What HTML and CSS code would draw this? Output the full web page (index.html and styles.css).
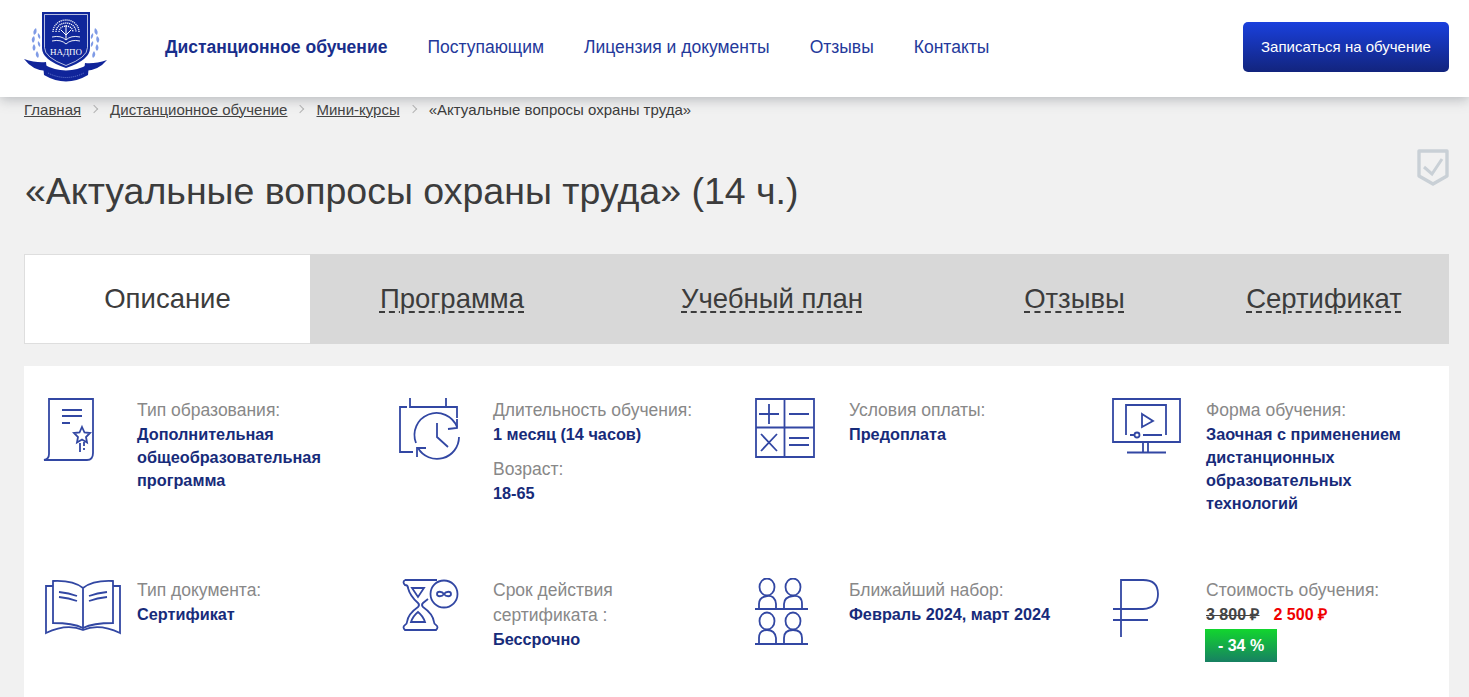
FILE: index.html
```html
<!DOCTYPE html>
<html lang="ru">
<head>
  <meta charset="UTF-8" />
  <meta name="viewport" content="width=device-width, initial-scale=1.0"/>
  <title>Актуальные вопросы охраны труда</title>
  <link rel="stylesheet" href="styles.css">
</head>
<body>
  <!-- Header -->
  <header class="header">
    <a class="logo" href="#">
      <svg width="84" height="73" viewBox="0 0 84 73">
        <g fill="#7f9be6">
          <path d="M12 17q-4 3-2 7q4-2 2-7zM10 25q-4 3-1 7q3-3 1-7zM10 33q-3 4 0 7q3-3 0-7zM13 40q-3 4 1 7q2-3-1-7z"/>
          <path d="M14 22q3 2 2 6q-3-2-2-6zM14 30q3 2 2 6q-3-2-2-6z"/>
          <path d="M71 17q4 3 2 7q-4-2-2-7zM73 25q4 3 1 7q-3-3-1-7zM73 33q3 4 0 7q-3-3 0-7zM70 40q3 4-1 7q-2-3 1-7z"/>
          <path d="M69 22q-3 2-2 6q3-2 2-6zM69 30q-3 2-2 6q3-2 2-6z"/>
        </g>
        <path d="M0 48q12 4 22 3l1 9q-14 0-23-12zM83 49q-12 4-22 3l-1 8q14 0 23-11z" fill="#10249a"/>
        <path d="M18 1h48v36q0 12-24 20q-24-8-24-20z" fill="#10279b"/>
        <path d="M20.500 3.500h43v33q0 10-21.500 18q-21.500-8-21.500-18z" fill="none" stroke="#fff" stroke-width=".7"/>
        <g fill="none" stroke="#fff" stroke-width="1.300" stroke-dasharray="1.200 .8">
          <path d="M29 21a13 12 0 0 1 26 0"/>
          <path d="M32 21a10 9 0 0 1 20 0"/>
          <path d="M35 21a7 6 0 0 1 14 0"/>
        </g>
        <path d="M42 14v15M37 19l5 5M47 19l-5 5" stroke="#fff" stroke-width="1" fill="none"/>
        <path d="M28 26q9-2 14 3q5-5 14-3M28 30q9-2 14 3q5-5 14-3" fill="none" stroke="#fff" stroke-width=".9"/>
        <text class="logo-text" x="42" y="43.500" text-anchor="middle">НАДПО</text>
        <path d="M19 53q23 13 46 0l-1 11q-22 13-44 0z" fill="#10249a"/>
        <path d="M24 62q18 9 36 0" fill="none" stroke="#9fb0ee" stroke-width=".6" stroke-dasharray="1 1"/>
      </svg>
    </a>
    <nav class="nav">
      <a class="nav-link active" href="#">Дистанционное обучение</a>
      <a class="nav-link" href="#">Поступающим</a>
      <a class="nav-link" href="#">Лицензия и документы</a>
      <a class="nav-link" href="#">Отзывы</a>
      <a class="nav-link" href="#">Контакты</a>
    </nav>
    <a class="btn-signup" href="#">Записаться на обучение</a>
  </header>

  <main class="page">
    <div class="breadcrumbs">
      <a href="#">Главная</a><i class="sep"></i>
      <a href="#">Дистанционное обучение</a><i class="sep"></i>
      <a href="#">Мини-курсы</a><i class="sep"></i>
      <span>«Актуальные вопросы охраны труда»</span>
    </div>

    <div class="title-row">
      <h1>«Актуальные вопросы охраны труда» (14 ч.)</h1>
      <svg class="badge-check" width="32" height="38" viewBox="0 0 32 38">
        <path d="M2 3h28v25l-14 8l-14-8z" fill="none" stroke="#c9d0d6" stroke-width="3.400" stroke-linejoin="round"/>
        <path d="M7 19l8 7l10-15" fill="none" stroke="#c9d0d6" stroke-width="3"/>
      </svg>
    </div>

    <div class="tabs">
      <div class="tab active">Описание</div>
      <div class="tab"><a href="#">Программа</a></div>
      <div class="tab"><a href="#">Учебный план</a></div>
      <div class="tab"><a href="#">Отзывы</a></div>
      <div class="tab"><a href="#">Сертификат</a></div>
    </div>

    <section class="panel">
      <div class="item">
        <div class="icon">
          <svg width="54" height="64" viewBox="0 0 54 64">
            <path d="M6 1h44v54q0 7-6 7H1q5-1 5-6z"/>
            <path d="M19 12h20M19 18h20M19 25h8"/>
            <path d="M39 29l2.500 5.500l5.500.5l-4 4l1 5.500l-5-3l-5 3l1-5.500l-4-4l5.500-.5z"/>
            <path d="M37 45v9M41 44v4M41 50v2"/>
          </svg>
        </div>
        <div class="text">
          <div class="label">Тип образования:</div>
          <div class="value">Дополнительная общеобразовательная программа</div>
        </div>
      </div>

      <div class="item">
        <div class="icon">
          <svg width="62" height="64" viewBox="0 0 62 64">
            <path d="M8 9H1v45h13M11 0v9h36M47 0v9h11v11"/>
            <path d="M17 45A22 22 0 0 1 58 29M60 39A22 22 0 0 1 19 50"/>
            <path d="M49 31l9-1l0-9M18 59v-9h9"/>
            <path d="M38 25v14l11 10"/>
          </svg>
        </div>
        <div class="text">
          <div class="label">Длительность обучения:</div>
          <div class="value">1 месяц (14 часов)</div>
          <div class="label extra">Возраст:</div>
          <div class="value">18-65</div>
        </div>
      </div>

      <div class="item">
        <div class="icon">
          <svg width="60" height="60" viewBox="0 0 60 60">
            <path d="M1 1h58v58H1zM29.500 1v58M1 29.500h58"/>
            <path d="M14 6v20M4 16h20M6 36l16 17M22 36L6 53M34 16h20M34 40h20M34 47h20"/>
          </svg>
        </div>
        <div class="text">
          <div class="label">Условия оплаты:</div>
          <div class="value">Предоплата</div>
        </div>
      </div>

      <div class="item">
        <div class="icon">
          <svg width="69" height="56" viewBox="0 0 69 56">
            <path d="M1 1h67v43H1zM14 37V7h40v30"/>
            <path d="M30 16l11 7l-11 6z"/>
            <circle cx="25" cy="37" r="2.500"/>
            <path d="M18 37h4M31 37h19M31 44v10M36 44v10M15 54.500h39"/>
          </svg>
        </div>
        <div class="text">
          <div class="label">Форма обучения:</div>
          <div class="value">Заочная с применением дистанционных образовательных технологий</div>
        </div>
      </div>

      <div class="item">
        <div class="icon">
          <svg width="79" height="58" viewBox="-2 0 79 58">
            <path d="M38 10Q28 2 8 3v42q20 0 30 5q10-5 30-5V3Q48 2 38 10zM38 10v42"/>
            <path d="M8 8H1v47q21-10 37-3q16-7 37 3V8h-7"/>
            <path d="M14 14q10 1 18 4M14 19q10 1 18 4M62 14q-10 1-18 4M62 19q-10 1-18 4"/>
          </svg>
        </div>
        <div class="text">
          <div class="label">Тип документа:</div>
          <div class="value">Сертификат</div>
        </div>
      </div>

      <div class="item">
        <div class="icon">
          <svg width="61" height="54" viewBox="-1 0 61 54">
            <path d="M5 2h32M5 2q-3 2 0 5q3 0 3 3q2 8 10 15q2 2 0 4q-10 7-11 15q0 2-2 3q-3 2 0 5h31q3-3 0-5q-2-1-2-3q-1-8-11-15q-2-2 0-4l5-4"/>
            <path d="M12 10h12l-6 9zM11 44q2-6 7-10q5 4 7 10z"/>
            <circle cx="44" cy="16" r="13.500"/>
            <path d="M44 16c-2-3-7-3-7 0s5 3 7 0s7-3 7 0s-5 3-7 0z"/>
          </svg>
        </div>
        <div class="text">
          <div class="label">Срок действия<br>сертификата :</div>
          <div class="value">Бессрочно</div>
        </div>
      </div>

      <div class="item">
        <div class="icon">
          <svg width="53" height="67" viewBox="0 0 53 67">
            <path d="M0 31h53M0 66h53"/>
            <ellipse cx="12" cy="9" rx="7.500" ry="8.500"/>
            <ellipse cx="38" cy="9" rx="7.500" ry="8.500"/>
            <ellipse cx="12" cy="43" rx="7.500" ry="8.500"/>
            <ellipse cx="38" cy="43" rx="7.500" ry="8.500"/>
            <path d="M4 31v-5q0-7 8-8t9 8v5M29 31v-5q0-7 9-8t9 8v5M4 66v-6q0-8 8-8t9 8v6M29 66v-6q0-8 9-8t9 8v6"/>
          </svg>
        </div>
        <div class="text">
          <div class="label">Ближайший набор:</div>
          <div class="value">Февраль 2024, март 2024</div>
        </div>
      </div>

      <div class="item">
        <div class="icon">
          <svg width="48" height="60" viewBox="-1 0 48 60">
            <path d="M8 59V2h22q15 0 15 14t-15 15H0M0 42h35"/>
          </svg>
        </div>
        <div class="text">
          <div class="label">Стоимость обучения:</div>
          <div class="prices"><s>3 800 ₽</s><b>2 500 ₽</b></div>
          <div class="discount">- 34 %</div>
        </div>
      </div>
    </section>
  </main>
</body>
</html>
```

FILE: styles.css
```css
* {
  box-sizing: border-box;
}
body {
  margin: 0;
  font-family: "Liberation Sans", Arial, sans-serif;
  background: #f1f1f1;
  color: #3c3c3c;
}

/* Header */
.header {
  position: relative;
  z-index: 2;
  display: flex;
  align-items: center;
  height: 97px;
  padding: 0 20px 0 24px;
  background: white;
  box-shadow: 0 2px 12px rgba(60,70,80,0.35);
}
.logo {
  display: block;
  width: 84px;
  height: 73px;
  margin-right: 57px;
  margin-top: -3px;
}
.logo-text {
  font-family: "Liberation Serif", serif;
  font-size: 9px;
  fill: white;
}
.nav {
  display: flex;
  gap: 40px;
  flex: 1;
  margin-top: -3px;
}
.nav-link {
  font-size: 17.500px;
  color: #24399b;
  text-decoration: none;
}
.nav-link.active {
  font-weight: bold;
  color: #182e8b;
}
.btn-signup {
  display: flex;
  align-items: center;
  justify-content: center;
  width: 206px;
  height: 50px;
  margin-top: -3px;
  padding-bottom: 2px;
  border-radius: 5px;
  background: linear-gradient(#1a40dd, #12247d);
  color: white;
  font-size: 15px;
  text-decoration: none;
}

.page {
  padding: 0 20px 0 24px;
}

/* Breadcrumbs */
.breadcrumbs {
  display: flex;
  align-items: center;
  height: 24px;
  font-size: 15px;
}
.breadcrumbs a {
  color: #444;
}
.sep {
  width: 6px;
  height: 6px;
  margin: 0 13px 0 10px;
  border-top: 1px solid #b5b5b5;
  border-right: 1px solid #b5b5b5;
  transform: rotate(45deg);
}

.title-row {
  position: relative;
  height: 133px;
  padding-top: 45px;
}
h1 {
  margin: 0 0 0 1px;
  font-size: 37.500px;
  line-height: 50px;
  font-weight: normal;
  color: #3c3c3c;
}
.badge-check {
  position: absolute;
  right: 0;
  top: 27px;
}

/* Tabs */
.tabs {
  display: grid;
  grid-template-columns: 286px 284px 356px 249px 250px;
  height: 90px;
  padding-bottom: 2px;
  background: #d8d8d8;
  font-size: 27.500px;
}
.tab {
  display: flex;
  align-items: center;
  justify-content: center;
}
.tab.active {
  height: 90px;
  background: white;
  border: 1px solid #dedede;
  border-right: none;
}
.tab a {
  color: #3c3c3c;
  text-decoration: underline dashed;
  text-decoration-thickness: 2px;
  text-underline-offset: 3px;
}

/* Info panel */
.panel {
  display: grid;
  grid-template-columns: 356px 356px 357px 1fr;
  grid-template-rows: 180px auto;
  height: 331px;
  margin-top: 22px;
  padding: 32px 0 0 19px;
  background: white;
}
.item {
  display: flex;
}
.icon {
  flex: none;
  width: 94px;
}
.icon svg {
  display: block;
  fill: none;
  stroke: #3247a3;
  stroke-width: 1.800;
}
.text {
  max-width: 215px;
  font-size: 17.500px;
}
.label {
  line-height: 25px;
  color: #888;
}
.label.extra {
  margin-top: 11px;
}
.value {
  line-height: 23px;
  font-size: 16.250px;
  font-weight: bold;
  color: #172b7a;
}
.prices {
  line-height: 24px;
  font-size: 16px;
  font-weight: bold;
}
.prices s {
  margin-right: 14px;
  color: #444;
}
.prices b {
  color: #f00000;
}
.discount {
  width: 72px;
  height: 33px;
  margin: 2px 0 0 -1px;
  background: linear-gradient(#12d62e, #178062);
  color: white;
  font-size: 16px;
  font-weight: bold;
  line-height: 33px;
  text-align: center;
}
```
